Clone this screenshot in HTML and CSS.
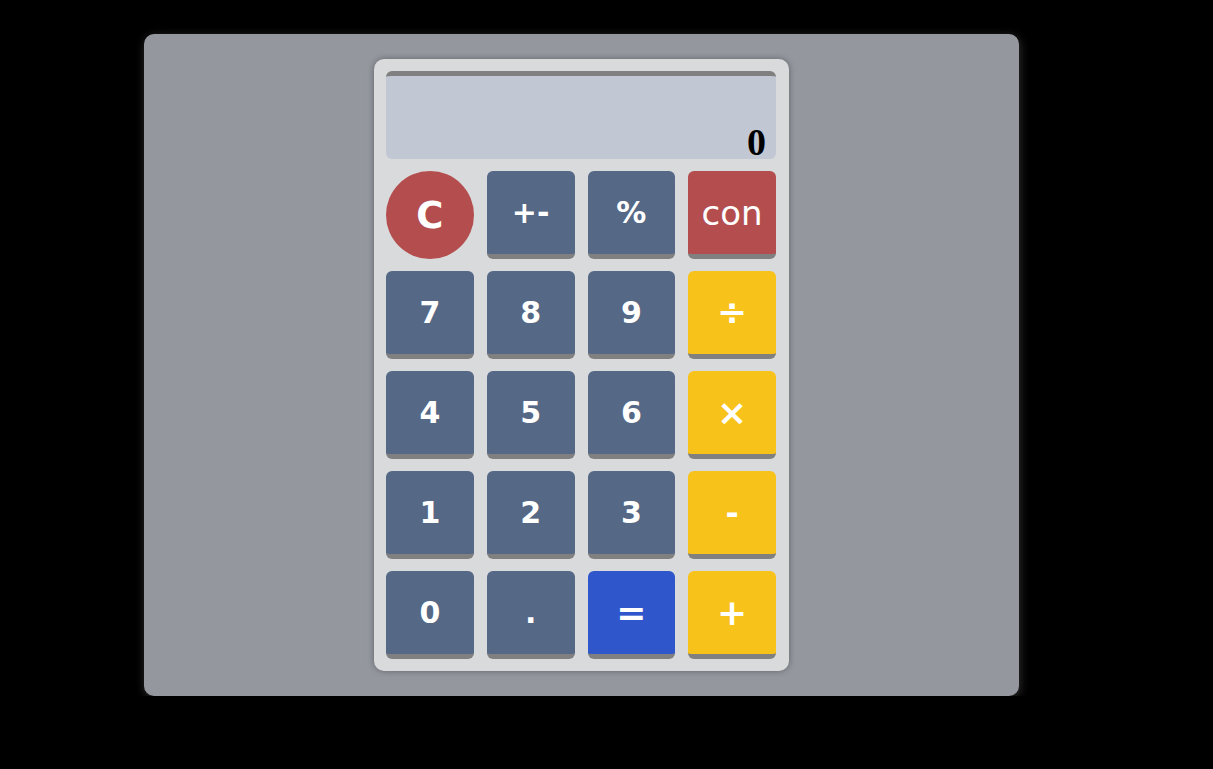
FILE: index.html
```html
<!DOCTYPE html>
<html>
<head>
<meta charset="utf-8">
<link rel="stylesheet" href="styles.css">
</head>
<body>
<div class="panel">
  <div class="calc">
    <div class="display">0</div>
    <div class="keys">
      <div class="key clear">C</div>
      <div class="key num">+-</div>
      <div class="key num">%</div>
      <div class="key con">con</div>
      <div class="key num">7</div>
      <div class="key num">8</div>
      <div class="key num">9</div>
      <div class="key op">÷</div>
      <div class="key num">4</div>
      <div class="key num">5</div>
      <div class="key num">6</div>
      <div class="key op">×</div>
      <div class="key num">1</div>
      <div class="key num">2</div>
      <div class="key num">3</div>
      <div class="key op minus">-</div>
      <div class="key num">0</div>
      <div class="key num">.</div>
      <div class="key eq">=</div>
      <div class="key op">+</div>
    </div>
  </div>
</div>
</body>
</html>
```
FILE: styles.css
```css
html, body {
  margin: 0;
  padding: 0;
  background: #000;
}
body {
  padding: 34px 0 0 144px;
  font-family: "DejaVu Sans", Verdana, sans-serif;
}
.panel {
  width: 875px;
  height: 662px;
  box-sizing: border-box;
  padding: 25px 0;
  background: #94979e;
  border-radius: 10px;
  box-shadow: 1px 2px 10px rgba(140, 140, 140, 0.35);
  display: flex;
  justify-content: center;
}
.calc {
  width: 415px;
  height: 612px;
  box-sizing: border-box;
  padding: 12px 13px 12px 12px;
  background: #d9dadc;
  border-radius: 10px;
  box-shadow: 0 0 6px rgba(0, 0, 0, 0.35);
  display: flex;
  flex-direction: column;
  gap: 12px;
}
.display {
  height: 88px;
  box-sizing: border-box;
  background: #c1c7d3;
  border-top: 5px solid #808080;
  border-radius: 6px;
  display: flex;
  align-items: flex-end;
  justify-content: flex-end;
  padding: 0 10px;
  font-family: "Liberation Serif", "Times New Roman", serif;
  font-weight: bold;
  font-size: 38px;
  line-height: 34px;
  color: #000;
}
.keys {
  display: grid;
  grid-template-columns: repeat(4, 1fr);
  grid-auto-rows: 88px;
  column-gap: 13px;
  row-gap: 12px;
}
.key {
  box-sizing: border-box;
  border-radius: 6px;
  border-bottom: 5px solid #808080;
  display: flex;
  align-items: center;
  justify-content: center;
  color: #fff;
  font-weight: bold;
  font-size: 30px;
}
.num {
  background: #556886;
}
.clear {
  background: #b44e4e;
  border-radius: 50%;
  border-bottom: none;
  font-size: 37px;
}
.con {
  background: #b44e4e;
  font-weight: normal;
  font-size: 34px;
}
.op {
  background: #f7c31a;
  font-size: 36px;
}
.minus {
  font-size: 32px;
}
.eq {
  background: #3056cc;
  font-size: 36px;
}
```
